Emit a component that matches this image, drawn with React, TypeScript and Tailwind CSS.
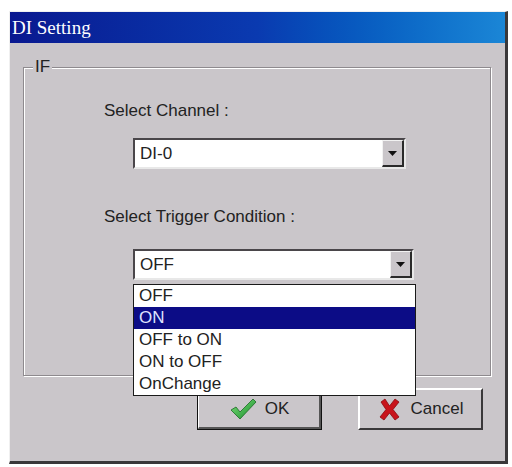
import React from 'react';

const OPTIONS = ['OFF', 'ON', 'OFF to ON', 'ON to OFF', 'OnChange'];

function Arrow() {
  return (
    <div className="w-[22px] h-full bg-[#cac6ca] border-t border-l border-t-[#f2f2f2] border-l-[#f2f2f2] border-r-2 border-b-2 border-r-[#2a2a2a] border-b-[#2a2a2a] flex items-center justify-center">
      <svg width="9" height="5" viewBox="0 0 9 5">
        <polygon points="0,0 9,0 4.5,5" fill="#111" />
      </svg>
    </div>
  );
}

function Combo({ value, width }: { value: string; width: string }) {
  return (
    <div className={`${width} h-[31px] bg-white border-2 border-t-[#4a464a] border-l-[#4a464a] border-r-[#e8e8e8] border-b-[#e8e8e8] flex items-stretch`}>
      <div className="flex-1 flex items-center pl-[5px] text-[17px] text-[#222]">{value}</div>
      <Arrow />
    </div>
  );
}

function CheckIcon() {
  return (
    <svg width="28" height="24" viewBox="0 0 28 24">
      <defs>
        <linearGradient id="ck" x1="0" y1="0" x2="1" y2="1">
          <stop offset="0" stopColor="#7ee07a" />
          <stop offset="1" stopColor="#158a2a" />
        </linearGradient>
      </defs>
      <path d="M2 13 L7 10 L11 15 L24 2 L27 5 L11 22 Z" fill="url(#ck)" stroke="#1a6a22" strokeWidth="0.8" />
    </svg>
  );
}

function CrossIcon() {
  return (
    <svg width="23" height="23" viewBox="0 0 23 23">
      <path d="M3 4 L7 1 L11.5 8 L17 1 L21 4 L15 11.5 L21 19 L17 22 L11.5 15 L6 22 L2 19 L8 11.5 Z" fill="#c8141c" stroke="#8a0a10" strokeWidth="0.8" />
    </svg>
  );
}

export default function App() {
  return (
    <div className="w-[512px] h-[467px] bg-white pl-[9px] pt-[11px]" style={{ fontFamily: '"Liberation Sans", Arial, sans-serif' }}>
      <div className="w-[499px] h-[453px] bg-[#cac6ca] border-t border-l border-t-[#f0f0f0] border-l-[#f0f0f0] border-r-[3px] border-b-[3px] border-r-[#3a383a] border-b-[#3a383a] flex flex-col">
        {/* Title */}
        <div className="h-[31px] bg-gradient-to-r from-[#0a1890] via-[#0a3ab0] to-[#1b86d6] flex items-center pl-[2px]">
          <span className="text-white text-[19px] leading-none" style={{ fontFamily: '"Liberation Serif", "Times New Roman", serif' }}>
            DI Setting
          </span>
        </div>

        {/* IF group */}
        <div className="relative ml-[13px] mt-[24px] w-[468px] h-[309px] border border-[#8e8a8e] shadow-[inset_1px_1px_0_#ffffff,1px_1px_0_#ffffff] pl-[80px] flex flex-col">
          <span className="absolute -top-[11px] left-[9px] px-[2px] bg-[#cac6ca] text-[17px] leading-[20px] text-[#222]">IF</span>
          <div className="mt-[33px] text-[17px] leading-[20px] text-[#222]">Select Channel :</div>
          <div className="mt-[17px] ml-[29px]">
            <Combo value="DI-0" width="w-[273px]" />
          </div>
          <div className="mt-[38px] text-[17px] leading-[20px] text-[#222]">Select Trigger Condition :</div>
          <div className="mt-[22px] ml-[29px] relative z-10">
            <Combo value="OFF" width="w-[281px]" />
            <ul className="absolute left-0 top-[35px] w-[283px] bg-white border border-[#1a1a1a] text-[17px] leading-[22px] text-[#222]">
              {OPTIONS.map((o) => (
                <li key={o} className={`pl-[5px] h-[22px] ${o === 'ON' ? 'bg-[#0c0c86] text-[#dfe3ff]' : ''}`}>
                  {o}
                </li>
              ))}
            </ul>
          </div>
        </div>

        {/* Buttons */}
        <div className="mt-[12px] pl-[187px] flex gap-[36px]">
          <button className="w-[125px] h-[42px] border border-[#111] bg-[#cac6ca] p-0">
            <div className="w-full h-full border-t border-l border-t-white border-l-white border-r-2 border-b-2 border-r-[#555] border-b-[#555] flex items-center justify-center gap-[8px] text-[17px] text-[#222]">
              <CheckIcon />
              <span>OK</span>
            </div>
          </button>
          <button className="w-[125px] h-[42px] bg-[#cac6ca] border-t-2 border-l-2 border-t-white border-l-white border-r-2 border-b-2 border-r-[#3a383a] border-b-[#3a383a] flex items-center justify-center gap-[10px] text-[17px] text-[#222]">
            <CrossIcon />
            <span>Cancel</span>
          </button>
        </div>
      </div>
    </div>
  );
}
